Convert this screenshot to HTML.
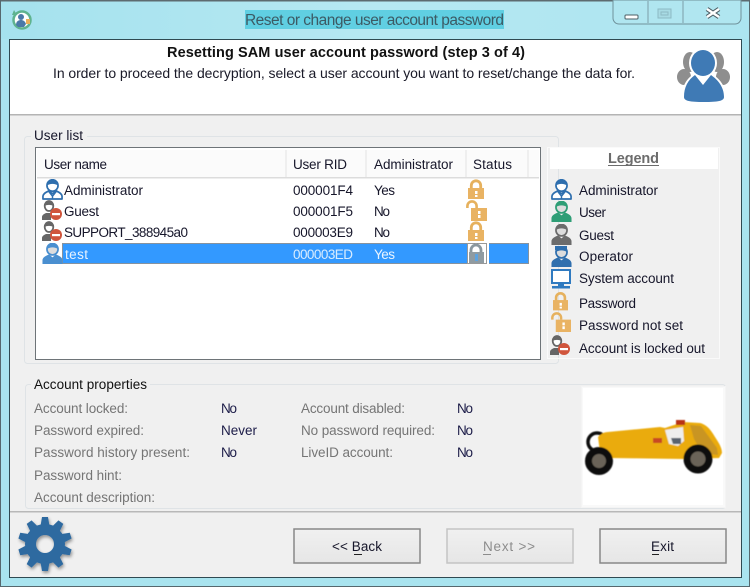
<!DOCTYPE html>
<html><head><meta charset="utf-8"><style>
html,body{margin:0;padding:0;width:750px;height:587px;overflow:hidden;background:#a9e4ef}
svg{display:block;filter:blur(.3px)}
text{font-family:"Liberation Sans",sans-serif;font-size:13.5px;fill:#16162a}
.l{fill:#757575}.v{fill:#1c1c48}
</style></head><body>
<svg width="750" height="587" viewBox="0 0 750 587" xmlns="http://www.w3.org/2000/svg">
<defs>
<linearGradient id="tb" x1="0" x2="1" y1="0" y2="0"><stop offset="0" stop-color="#a5e2ee"/><stop offset=".5" stop-color="#b6e8f2"/><stop offset="1" stop-color="#ace5f0"/></linearGradient>
<linearGradient id="btn" x1="0" x2="0" y1="0" y2="1"><stop offset="0" stop-color="#f0f0f0"/><stop offset="1" stop-color="#e6e6e6"/></linearGradient>
<filter id="sh" x="-20%" y="-20%" width="150%" height="150%"><feDropShadow dx="1" dy="2" stdDeviation="1.500" flood-color="#000" flood-opacity=".4"/></filter>
<filter id="bl"><feGaussianBlur stdDeviation=".6"/></filter>
<symbol id="person" viewBox="0 0 22 22">
<path d="M1 21v-3c0-3 4-4.500 6-5.500l4 3 4-3c2 1 6 2.500 6 5.500v3z" fill="#fff" stroke="currentColor" stroke-width="1.800" stroke-linejoin="round"/>
<path d="M7 13l4 5 4-5M11 18v3" fill="none" stroke="currentColor" stroke-width="1.500"/>
<ellipse cx="11" cy="6.800" rx="5.800" ry="6" fill="#fff" stroke="currentColor" stroke-width="1.800"/>
<path d="M5.200 7C5.500 2 8 .8 11 .8s5.500 1.200 5.800 6.200C14 4.500 8 4.500 5.200 7z" fill="currentColor"/>
</symbol>
<symbol id="solid" viewBox="0 0 22 22">
<path d="M0.500 22v-4c0-3 4-5 7-6l3.500 3 3.500-3c3 1 7 3 7 6v4z" fill="currentColor"/>
<ellipse cx="11" cy="6.500" rx="5.800" ry="6" fill="#ddd" stroke="currentColor" stroke-width="1.800"/>
<path d="M5.200 6.500C5.500 2 8 1 11 1s5.500 1 5.800 5.500C14 4 8 4 5.200 6.500z" fill="currentColor"/>
</symbol>
<symbol id="lock" viewBox="0 0 16 20">
<path d="M3.300 10V6.500a4.700 4.700 0 0 1 9.400 0V10" fill="none" stroke="#e6b15d" stroke-width="2.800"/>
<rect x="0" y="9" width="16" height="11" fill="#e9b363"/>
<rect x="7" y="12" width="2.500" height="3" fill="#fff"/><rect x="7" y="16" width="2.500" height="2" fill="#fff"/>
</symbol>
<symbol id="open" viewBox="0 0 21 21">
<path d="M1.400 8V6a4.600 4.600 0 0 1 9.200 0v2" fill="none" stroke="#e6b15d" stroke-width="2.600"/>
<rect x="5" y="8" width="16" height="13" fill="#e9b363"/>
<rect x="12" y="11" width="2.500" height="3" fill="#fff"/><rect x="12" y="15" width="2.500" height="3" fill="#fff"/>
</symbol>
<symbol id="out" viewBox="0 0 20 21">
<path d="M0 20v-3c0-2 2-3 4-4h5v7z" fill="#666"/>
<ellipse cx="7" cy="6" rx="4.300" ry="5" fill="#fff" stroke="#666" stroke-width="1.800"/>
<path d="M2.700 6C3 2 5 1 7 1s4 1 4.300 5C9 4.500 5 4.500 2.700 6z" fill="#666"/>
<circle cx="14" cy="14" r="6" fill="#d0553c"/>
<rect x="10" y="13" width="8" height="2.200" fill="#fff"/>
</symbol>
<path id="t" d="M-4.500 -18L-3 -27L3 -27L4.500 -18z" fill="#2f6aa0"/>
</defs>

<!-- window frame -->
<rect width="750" height="587" fill="#a9e4ef"/>
<rect width="750" height="39" fill="url(#tb)"/>
<rect x="0" y="0" width="750" height="1.500" fill="#5d6b70"/>
<rect x="0" y="0" width="1" height="587" fill="#56686e"/>
<rect x="749" y="0" width="1" height="587" fill="#56686e"/>
<rect x="0" y="586" width="750" height="1" fill="#56686e"/>
<rect x="9" y="39" width="733" height="539" fill="#2f4a52"/>
<rect x="10" y="40" width="731" height="537" fill="#f0f0f0"/>
<rect x="10" y="40" width="731" height="74" fill="#fff"/>
<rect x="10" y="114" width="731" height="1.500" fill="#b4b4b4"/>

<!-- title bar -->
<circle cx="22" cy="20" r="8.500" fill="#fff" stroke="#5fb38f" stroke-width="2.500"/>
<path d="M14 10l-2 5 5 0z" fill="#5fb38f"/>
<circle cx="21" cy="17" r="3" fill="#4b79a8"/>
<path d="M16 25c0-4 3-5 5-5s4 1 5 4l-2 3h-6z" fill="#4b79a8"/>
<rect x="26" y="19" width="4" height="5" fill="#eab05a"/>
<rect x="245" y="10" width="259" height="19" fill="#60cfe2"/>
<text x="245" y="25" textLength="259" style="font-size:15.500px;fill:#3c5a64">Reset or change user account password</text>
<path d="M613 0v18a6 6 0 0 0 6 6h116a6 6 0 0 0 6-6V0z" fill="#b0e6f0" stroke="#6f919a" stroke-width="1"/>
<path d="M648 1v22M683 1v22" stroke="#7d9fa8" stroke-width="1"/>
<rect x="625" y="15" width="13" height="4" rx="1" fill="#fff" stroke="#4d5f66"/>
<rect x="658" y="9" width="13" height="9" fill="#a8dbe4" stroke="#8db9c3"/>
<rect x="661" y="12" width="7" height="3" fill="none" stroke="#8db9c3"/>
<path d="M707 9l12 8M719 9l-12 8" stroke="#4d5f66" stroke-width="4.500"/>
<path d="M707 9l12 8M719 9l-12 8" stroke="#fff" stroke-width="2.500"/>

<!-- header -->
<text x="167" y="57" textLength="358" style="font-weight:bold;font-size:14.500px;fill:#111">Resetting SAM user account password (step 3 of 4)</text>
<text x="53" y="78" textLength="582" style="font-size:14px;fill:#1a1a28">In order to proceed the decryption, select a user account you want to reset/change the data for.</text>
<g fill="#8e8e8e">
<ellipse cx="690" cy="62" rx="7" ry="10"/><ellipse cx="717" cy="62" rx="7" ry="10"/>
<ellipse cx="684" cy="77" rx="7" ry="8"/><ellipse cx="723" cy="77" rx="7" ry="8"/>
</g>
<path d="M682 98C682 86 686 79 695 73L703 83L711 73C720 79 726 86 726 98V104H682z" fill="#fff"/>
<ellipse cx="703" cy="63" rx="14" ry="15" fill="#fff"/>
<ellipse cx="703" cy="63" rx="12" ry="13" fill="#3f7ab5"/>
<path d="M684 97C684 87 688 80 695 75L703 85L711 75C718 80 724 87 724 97C724 101 718 102 704 102C690 102 684 101 684 97z" fill="#3f7ab5"/>

<!-- user list group -->
<rect x="24.500" y="136.500" width="534" height="227" rx="3" fill="none" stroke="#dfe3e6"/>
<rect x="31" y="130" width="56" height="12" fill="#f0f0f0"/>
<text x="34" y="140" textLength="49">User list</text>
<rect x="35.500" y="147.500" width="505" height="212" fill="#fff" stroke="#6e7478"/>
<rect x="37" y="150" width="502" height="27" fill="#fbfbfb"/>
<rect x="37" y="177" width="502" height="1.500" fill="#dcdcdc"/>
<path d="M286 150v27M366 150v27M466 150v27M528 150v27" stroke="#e3e3e3"/>
<text x="44" y="169" textLength="63">User name</text>
<text x="293" y="169" textLength="54">User RID</text>
<text x="374" y="169" textLength="79">Administrator</text>
<text x="473" y="169" textLength="39">Status</text>

<use href="#person" x="42" y="179" width="21" height="21" color="#2f6fae"/>
<text x="64" y="195" textLength="79">Administrator</text>
<text x="293" y="195" textLength="60">000001F4</text>
<text x="374" y="195" textLength="21">Yes</text>
<use href="#lock" x="468" y="179" width="16" height="20"/>

<use href="#out" x="42" y="200" width="20" height="21"/>
<text x="64" y="216" textLength="35">Guest</text>
<text x="293" y="216" textLength="60">000001F5</text>
<text x="374" y="216" textLength="16">No</text>
<use href="#open" x="466" y="200" width="21" height="21"/>

<use href="#out" x="42" y="221" width="20" height="21"/>
<text x="64" y="237" textLength="124">SUPPORT_388945a0</text>
<text x="293" y="237" textLength="60">000003E9</text>
<text x="374" y="237" textLength="16">No</text>
<use href="#lock" x="468" y="221" width="16" height="20"/>

<rect x="62" y="243" width="467" height="21" fill="#3399ff"/>
<rect x="62.500" y="243.500" width="466" height="20" fill="none" stroke="#d98a3c" stroke-dasharray="1 1"/>
<use href="#solid" x="42" y="243" width="21" height="21" color="#4a8fd0"/>
<text x="65" y="259" textLength="23" style="fill:#e8f3ff">test</text>
<text x="293" y="259" textLength="60" style="fill:#d8ecff">000003ED</text>
<text x="374" y="259" textLength="21" style="fill:#eaf4ff">Yes</text>
<rect x="467" y="243" width="22" height="21" fill="#fff"/>
<rect x="467.500" y="243.500" width="19" height="20" fill="none" stroke="#333" stroke-dasharray="1 1"/>
<path d="M471 254v-4a5 5 0 0 1 10 0v4" fill="none" stroke="#8b979e" stroke-width="2.800"/>
<rect x="469" y="252" width="15" height="11" fill="#8f9ba2"/>
<rect x="475" y="254" width="3" height="7" fill="#5da3e0"/>

<!-- legend -->
<rect x="547.500" y="147.500" width="172" height="211" fill="none" stroke="#fafafa"/>
<rect x="550" y="148" width="168" height="21" fill="#fff"/>
<text x="608" y="163" textLength="51" style="font-weight:bold;font-size:14.500px;fill:#6c6c6c">Legend</text>
<rect x="608" y="165" width="51" height="1" fill="#6c6c6c"/>

<use href="#person" x="551" y="179" width="21" height="21" color="#2f6fae"/>
<text x="579" y="195" textLength="79">Administrator</text>
<use href="#solid" x="551" y="201" width="21" height="21" color="#2f9e76"/>
<text x="579" y="217" textLength="27">User</text>
<use href="#solid" x="551" y="224" width="21" height="21" color="#6c6c6c"/>
<text x="579" y="240" textLength="35">Guest</text>
<use href="#solid" x="551" y="246" width="21" height="21" color="#2f6fae"/>
<rect x="555" y="246" width="12" height="4" fill="#2f6fae"/>
<text x="579" y="261" textLength="54">Operator</text>
<rect x="552" y="270" width="18" height="13" fill="#fff" stroke="#2f7ac0" stroke-width="2"/>
<rect x="558" y="284" width="6" height="2" fill="#2f7ac0"/>
<rect x="552" y="286" width="18" height="2.500" fill="#2f7ac0"/>
<text x="579" y="283" textLength="95">System account</text>
<use href="#lock" x="553" y="291" width="15" height="20"/>
<text x="579" y="308" textLength="57">Password</text>
<use href="#open" x="551" y="312" width="20" height="20"/>
<text x="579" y="330" textLength="104">Password not set</text>
<use href="#out" x="550" y="335" width="20" height="21"/>
<text x="579" y="353" textLength="126">Account is locked out</text>

<!-- account properties -->
<rect x="25.500" y="384.500" width="700" height="124" rx="3" fill="none" stroke="#dfe3e6"/>
<rect x="31" y="378" width="119" height="12" fill="#f0f0f0"/>
<text x="34" y="389" textLength="113" style="fill:#111">Account properties</text>
<text class="l" x="34" y="413" textLength="94">Account locked:</text>
<text class="l" x="34" y="435" textLength="110">Password expired:</text>
<text class="l" x="34" y="457" textLength="156">Password history present:</text>
<text class="l" x="34" y="480" textLength="88">Password hint:</text>
<text class="l" x="34" y="502" textLength="121">Account description:</text>
<text class="v" x="221" y="413" textLength="16">No</text>
<text class="v" x="221" y="435" textLength="36">Never</text>
<text class="v" x="221" y="457" textLength="16">No</text>
<text class="l" x="301" y="413" textLength="104">Account disabled:</text>
<text class="l" x="301" y="435" textLength="134">No password required:</text>
<text class="l" x="301" y="457" textLength="92">LiveID account:</text>
<text class="v" x="457" y="413" textLength="16">No</text>
<text class="v" x="457" y="435" textLength="16">No</text>
<text class="v" x="457" y="457" textLength="16">No</text>

<!-- car -->
<rect x="581.500" y="386.500" width="144" height="121" fill="#f9f9f9" stroke="#f4f4f4"/>
<rect x="583" y="388" width="140" height="117" fill="#fff"/>
<g filter="url(#bl)">
<circle cx="597" cy="442" r="9" fill="none" stroke="#111" stroke-width="3.500"/>
<path d="M598 437C601 434 604 432 608 432L660 427L665 428L683 422L700 423C708 425 712 432 715 437C719 443 722 448 722 453L719 458L683 459L612 458L600 452z" fill="#eaab0c"/>
<path d="M690 425l11 1 16 22 1 7-16-2-8-14z" fill="#c99520"/>
<path d="M665 430l18-3 1 14-6 5-9-2z" fill="#eee"/>
<path d="M671 438l10 0 0 6-8 0z" fill="#5a6470"/>
<rect x="676" y="420" width="9" height="5" fill="#b83018"/>
<rect x="653" y="438" width="9" height="5" fill="#c84a20"/>
<circle cx="599" cy="461" r="10.500" fill="#6a6458" stroke="#0c0c0c" stroke-width="7"/>
<circle cx="698" cy="459" r="11" fill="#6a6458" stroke="#0c0c0c" stroke-width="7"/>
</g>

<!-- bottom -->
<rect x="10" y="511" width="731" height="1.500" fill="#b8b8b8"/>
<g filter="url(#sh)">
<circle cx="45" cy="544" r="14.500" fill="none" stroke="#2f6aa0" stroke-width="11"/>
<g transform="translate(45 544)">
<use href="#t"/><use href="#t" transform="rotate(36)"/><use href="#t" transform="rotate(72)"/><use href="#t" transform="rotate(108)"/><use href="#t" transform="rotate(144)"/><use href="#t" transform="rotate(180)"/><use href="#t" transform="rotate(216)"/><use href="#t" transform="rotate(252)"/><use href="#t" transform="rotate(288)"/><use href="#t" transform="rotate(324)"/>
</g>
</g>
<rect x="294" y="529" width="126" height="34" fill="url(#btn)" stroke="#888" stroke-width="1.500"/>
<text x="332" y="551" textLength="50">&lt;&lt; Back</text>
<rect x="354" y="554" width="8" height="1" fill="#222"/>
<rect x="447" y="529" width="126" height="34" fill="url(#btn)" stroke="#c4c4c4" stroke-width="1.500"/>
<text x="483" y="551" textLength="52" style="fill:#8c8c8c">Next &gt;&gt;</text>
<rect x="483" y="554" width="8" height="1" fill="#8c8c8c"/>
<rect x="600" y="529" width="126" height="34" fill="url(#btn)" stroke="#888" stroke-width="1.500"/>
<text x="651" y="551" textLength="23">Exit</text>
<rect x="652" y="554" width="7" height="1" fill="#222"/>
</svg>
</body></html>
